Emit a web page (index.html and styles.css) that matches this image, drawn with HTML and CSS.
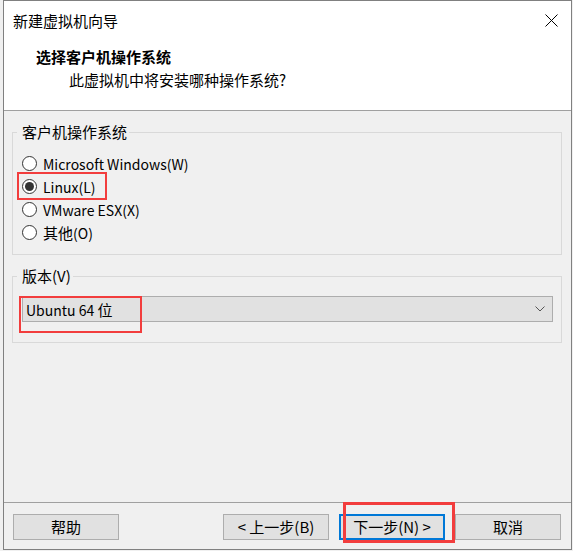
FILE: index.html
```html
<!DOCTYPE html>
<html lang="zh-CN">
<head>
<meta charset="utf-8">
<title>新建虚拟机向导</title>
<link rel="stylesheet" href="styles.css">
</head>
<body>
<div class="window">
  <div class="header">
    <div class="titlebar">
      <span class="title">新建虚拟机向导</span>
      <svg class="close" width="13" height="13" viewBox="0 0 13 13"><path d="M0.5 0.5 L12.5 12.5 M12.5 0.5 L0.5 12.5" stroke="#000" stroke-width="1" fill="none"/></svg>
    </div>
    <div class="head-title">选择客户机操作系统</div>
    <div class="head-sub">此虚拟机中将安装哪种操作系统?</div>
  </div>
  <div class="content">
    <fieldset class="group group-os">
      <legend>客户机操作系统</legend>
      <div class="radio-row"><span class="radio"></span><span class="lat">Microsoft Windows(W)</span></div>
      <div class="radio-row"><span class="radio checked"></span><span class="lat">Linux(L)</span><span class="mark mark-linux"></span></div>
      <div class="radio-row"><span class="radio"></span><span class="lat">VMware ESX(X)</span></div>
      <div class="radio-row"><span class="radio"></span><span>其他<span class="lat">(O)</span></span></div>
    </fieldset>
    <fieldset class="group group-ver">
      <legend>版本(V)</legend>
      <div class="select">
        <span><span class="lat">Ubuntu 64 </span>位</span>
        <svg class="chev" width="10" height="6" viewBox="0 0 10 6"><path d="M0.5 0.5 L5 5 L9.5 0.5" stroke="#555" stroke-width="1" fill="none"/></svg>
        <span class="mark mark-ubuntu"></span>
      </div>
    </fieldset>
  </div>
  <div class="footer">
    <button class="btn">帮助</button>
    <div class="spacer"></div>
    <button class="btn">&lt; 上一步(B)</button>
    <button class="btn btn-default">下一步(N) &gt;<span class="mark mark-next"></span></button>
    <button class="btn">取消</button>
  </div>
</div>
</body>
</html>
```
FILE: styles.css
```css
* { box-sizing: border-box; }
html, body { margin: 0; padding: 0; }
body {
  background: #f0f0f0;
  font-family: "Noto Sans CJK SC", "Noto Sans", sans-serif;
  font-size: 15px;
  color: #000;
}
.lat { font-size: 14px; }
.window {
  margin-left: 3px;
  width: 569px;
  height: 550px;
  border: 1px solid #808080;
  background: #f0f0f0;
  display: flex;
  flex-direction: column;
}
.header {
  background: #fff;
  height: 110px;
  border-bottom: 1px solid #a0a0a0;
}
.titlebar {
  height: 40px;
  display: flex;
  align-items: center;
  justify-content: space-between;
  padding: 0 13px 0 9px;
}
.title { line-height: 40px; }
.close { display: block; margin-top: -2px; }
.head-title {
  margin-top: 6px;
  padding-left: 32px;
  line-height: 20px;
  font-weight: bold;
}
.head-sub {
  margin-top: 3px;
  padding-left: 65px;
  line-height: 20px;
}
.content {
  flex: 1;
  padding-top: 11px;
}
.group {
  margin: 0 9px 0 8px;
  min-width: 0;
  border: 1px solid #d9d9d9;
  padding: 10px 8px 10px 4px;
}
.group legend {
  padding: 0 2px 0 5px;
  line-height: 20px;
}
.group-ver { margin-top: 11px; padding-bottom: 20px; }
.radio-row {
  position: relative;
  display: flex;
  align-items: center;
  height: 23px;
  margin-left: 5px;
}
.radio {
  width: 15px;
  height: 15px;
  border: 1px solid #333;
  border-radius: 50%;
  background: #fff;
  margin-right: 6px;
  display: flex;
  align-items: center;
  justify-content: center;
}
.radio.checked::after {
  content: "";
  width: 9px;
  height: 9px;
  border-radius: 50%;
  background: #333;
}
.mark {
  position: absolute;
  border: 2px solid #f23d3d;
  pointer-events: none;
}
.mark-linux { left: -5px; top: -3px; width: 90px; height: 28px; }
.select {
  position: relative;
  margin-left: 5px;
  height: 26px;
  background: #e1e1e1;
  border: 1px solid #adadad;
  display: flex;
  align-items: center;
  justify-content: space-between;
  padding: 0 7px 0 3px;
}
.chev { display: block; }
.mark-ubuntu { left: -4px; top: -1px; width: 123px; height: 37px; }
.footer {
  border-top: 1px solid #a0a0a0;
  height: 47px;
  padding: 11px 10px 0 9px;
  display: flex;
  align-items: flex-start;
  gap: 10px;
}
.spacer { flex: 1; }
.btn {
  position: relative;
  width: 106px;
  height: 26px;
  background: #e1e1e1;
  border: 1px solid #adadad;
  font: inherit;
  color: #000;
  padding: 0;
  line-height: 22px;
}
.btn-default { border: 2px solid #0078d7; }
.mark-next { left: 2px; top: -14px; width: 112px; height: 41px; border-width: 3px; }
```
